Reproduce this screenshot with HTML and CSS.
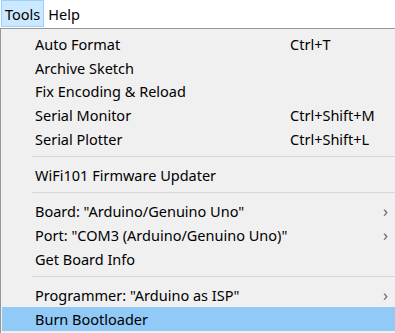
FILE: index.html
```html
<!DOCTYPE html>
<html lang="en">
<head>
    <meta charset="UTF-8">
    <title>Tools menu</title>
    <link rel="stylesheet" href="styles.css">
</head>
<body>
    <div class="menubar">
        <span class="menubar-item open">Tools</span>
        <span class="menubar-item">Help</span>
    </div>

    <div class="dropdown">
        <div class="item"><span class="label">Auto Format</span><span class="shortcut">Ctrl+T</span></div>
        <div class="item"><span class="label">Archive Sketch</span></div>
        <div class="item"><span class="label">Fix Encoding &amp; Reload</span></div>
        <div class="item"><span class="label">Serial Monitor</span><span class="shortcut">Ctrl+Shift+M</span></div>
        <div class="item"><span class="label">Serial Plotter</span><span class="shortcut">Ctrl+Shift+L</span></div>
        <div class="sep"></div>
        <div class="item"><span class="label">WiFi101 Firmware Updater</span></div>
        <div class="sep"></div>
        <div class="item"><span class="label">Board: "Arduino/Genuino Uno"</span><span class="arrow">&rsaquo;</span></div>
        <div class="item"><span class="label">Port: "COM3 (Arduino/Genuino Uno)"</span><span class="arrow">&rsaquo;</span></div>
        <div class="item"><span class="label">Get Board Info</span></div>
        <div class="sep"></div>
        <div class="item"><span class="label">Programmer: "Arduino as ISP"</span><span class="arrow">&rsaquo;</span></div>
        <div class="item active"><span class="label">Burn Bootloader</span></div>
    </div>
</body>
</html>
```

FILE: styles.css
```css
body {
    margin: 0;
    padding: 0;
    background-color: white;
    font-family: "Noto Sans", "Open Sans", sans-serif;
    font-size: 14.5px;
    color: black;
}

.menubar {
    display: flex;
    height: 28px;
    align-items: flex-start;
}

.menubar-item {
    padding: 2px 3px 0 3px;
    line-height: 23px;
    border: 1px solid transparent;
}

.menubar-item.open {
    background-color: #cce8ff;
    border-color: #99d1ff;
    margin-left: 1px;
}

.dropdown {
    width: 393px;
    border: 1px solid #979797;
    background-color: #f0f0f0;
    padding: 3px 1px 2px 1px;
}

.item {
    display: flex;
    align-items: center;
    height: 23.75px;
    padding-left: 33px;
}

.item.active {
    background-color: #91c9f7;
    height: 24px;
}

.label {
    width: 255px;
    white-space: nowrap;
}

.shortcut {
    white-space: nowrap;
}

.arrow {
    margin-left: auto;
    margin-right: 7px;
    color: #666;
    font-size: 16px;
}

.sep {
    height: 1px;
    background-color: #d7d7d7;
    margin: 5px 0 6.5px 30px;
}
```
